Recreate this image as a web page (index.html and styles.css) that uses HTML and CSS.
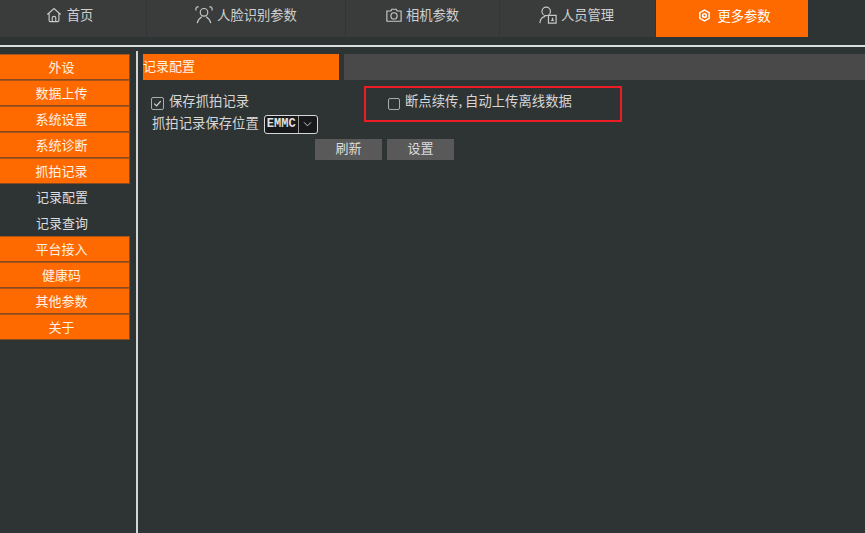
FILE: index.html
```html
<!DOCTYPE html>
<html lang="zh-CN">
<head>
<meta charset="utf-8">
<title>记录配置</title>
<link rel="stylesheet" href="styles.css">
</head>
<body>
<nav class="topnav">
  <a class="tab tab-home"><svg class="ico" viewBox="0 0 18 18"><path d="M1.500 8.500 9 1.800l7.500 6.700M3.500 7v8.200a1.300 1.300 0 0 0 1.300 1.300h8.400a1.300 1.300 0 0 0 1.300-1.300V7M7 16.500v-4a2 2 0 0 1 4 0v4"/></svg>首页</a>
  <a class="tab tab-face"><svg class="ico ico-lg" viewBox="0 0 20 20"><path d="M1 5V2.500L2.500 1H4M16 1h1.500L19 2.500V5"/><circle cx="10" cy="7" r="4.200"/><path d="M2.500 19c.8-4 3.500-6 5-7M17.500 19c-.8-4-3.500-6-5-7"/></svg>人脸识别参数</a>
  <a class="tab tab-cam"><svg class="ico" viewBox="0 0 18 18"><path d="M1 4.500h4.500l1-2h5l1 2H17v11.500H1z"/><circle cx="9" cy="10" r="3.500"/></svg>相机参数</a>
  <a class="tab tab-user"><svg class="ico ico-lg" viewBox="0 0 20 20"><circle cx="8" cy="6" r="4.700"/><path d="M1 19c.3-4 2.500-7 6-7.500"/><path d="M10.500 10.500h8.500v8.500h-8.500zM13.500 16h3M15 13v3"/></svg>人员管理</a>
  <a class="tab tab-more"><svg class="ico ico-more" viewBox="0 0 14 14"><path d="M7 1.200 12 4v6l-5 2.800L2 10V4z"/><circle cx="7" cy="7" r="2"/></svg>更多参数</a>
</nav>
<div class="rule"></div>
<div class="layout">
  <aside class="sidebar">
    <a class="side-item">外设</a>
    <a class="side-item">数据上传</a>
    <a class="side-item">系统设置</a>
    <a class="side-item">系统诊断</a>
    <a class="side-item">抓拍记录</a>
    <a class="side-sub">记录配置</a>
    <a class="side-sub">记录查询</a>
    <a class="side-item">平台接入</a>
    <a class="side-item">健康码</a>
    <a class="side-item">其他参数</a>
    <a class="side-item">关于</a>
  </aside>
  <main class="content">
    <header class="head">
      <div class="head-title">记录配置</div>
      <div class="head-rest"></div>
    </header>
    <section class="body">
      <div class="form">
        <label class="check-row"><span class="box box-on"><svg viewBox="0 0 12 12"><path d="M2.500 6.200 5 8.700l4.500-5.400"/></svg></span>保存抓拍记录</label>
        <div class="select-row">抓拍记录保存位置
          <span class="select"><span class="select-val">EMMC</span><span class="select-arrow"><svg viewBox="0 0 12 8"><path d="m2 1.500 4 4 4-4"/></svg></span></span>
        </div>
        <div class="actions">
          <button class="btn">刷新</button>
          <button class="btn">设置</button>
        </div>
      </div>
      <div class="highlight">
        <label class="check-row check-plain"><span class="box"></span>断点续传, 自动上传离线数据</label>
      </div>
    </section>
  </main>
</div>
</body>
</html>
```
FILE: styles.css
```css
* { box-sizing: border-box; }
html, body { height: 100%; }
body {
  margin: 0;
  overflow: hidden;
  background: #2e3334;
  color: #d6d6d6;
  font: 13px/17px "Noto Sans CJK SC", "Liberation Sans", sans-serif;
}
.topnav {
  display: flex;
  height: 37px;
  width: 808px;
  background: #3a3b3b;
}
.tab {
  display: flex;
  align-items: center;
  justify-content: center;
  gap: 4px;
  padding-bottom: 8px;
  font-size: 13.300px;
  color: #cfcfcf;
  border-right: 1px solid #323535;
}
.tab-home { width: 147px; padding-right: 7px; gap: 5px; }
.tab-face { width: 199px; }
.tab-cam { width: 154px; }
.tab-user { width: 156px; padding-right: 2px; }
.tab-more {
  width: 152px;
  background: #ff6a00;
  color: #fff;
  border-right: 0;
  padding-bottom: 6px;
  gap: 6px;
  padding-left: 5px;
}
.ico {
  width: 16px;
  height: 16px;
  fill: none;
  stroke: #c8c8c8;
  stroke-width: 1.300;
}
.ico-lg { width: 18px; height: 18px; }
.ico-more { width: 13px; height: 13px; stroke: #fff; stroke-width: 1.600; }
.rule {
  height: 2px;
  margin-top: 8px;
  background: #d9dedd;
}
.layout {
  display: flex;
  height: 487px;
}
.sidebar {
  display: flex;
  flex-direction: column;
  width: 138px;
  padding: 3px 6px 0 0;
  margin-top: 4px;
  border-right: 2px solid #d3d6d6;
}
.side-item, .side-sub {
  display: flex;
  align-items: center;
  justify-content: center;
  flex: none;
  height: 26px;
  padding: 0 6px 2px 0;
  color: #dedede;
}
.side-item {
  background: #ff6a00;
  color: #fff2e6;
  border: 1px solid #8a4a1e;
  border-left: 0;
  border-top-color: #a85518;
}
.content {
  flex: 1;
  min-width: 0;
  padding: 7px 0 0 5px;
}
.head {
  display: flex;
  gap: 5px;
  height: 26px;
}
.head-title {
  width: 196px;
  background: #ff6a00;
  color: #fff2e6;
  line-height: 23px;
}
.head-rest {
  flex: 1;
  background: #494949;
}
.body {
  display: flex;
  padding-top: 6px;
  font-size: 13.350px;
}
.form {
  width: 221px;
  padding: 4px 0 0 9px;
}
.check-row {
  display: flex;
  align-items: center;
  gap: 5px;
  height: 20px;
}
.box {
  width: 12px;
  height: 12px;
  flex: none;
  margin-top: 6px;
  border: 1px solid #a9acac;
  border-radius: 2px;
}
.box-on { width: 13px; height: 13px; margin-left: -1px; }
.box svg {
  display: block;
  width: 11px;
  height: 11px;
  fill: none;
  stroke: #d8d8d8;
  stroke-width: 1.300;
}
.select-row {
  display: flex;
  align-items: center;
  gap: 5px;
  height: 20px;
  margin-top: 2px;
  white-space: nowrap;
}
.select {
  display: flex;
  width: 54px;
  height: 19px;
  flex: none;
  margin-top: 5px;
  background: #17191a;
  border: 1px solid #d6d6d6;
  border-radius: 3px;
}
.select-val {
  width: 34px;
  border-right: 1px solid #9a9a9a;
  font: bold 12px/17px "Liberation Mono", monospace;
  text-align: center;
  color: #e0e0e0;
}
.select-arrow { flex: 1; display: flex; align-items: center; justify-content: center; }
.select-arrow svg {
  width: 11px;
  height: 7px;
  fill: none;
  stroke: #d0d0d0;
  stroke-width: 1.100;
}
.actions {
  display: flex;
  gap: 5px;
  margin: 7px -163px 0 163px;
  width: 139px;
}
.btn {
  width: 67px;
  height: 21px;
  padding: 0 0 5px;
  border: 0;
  background: #595959;
  color: #dcdcdc;
  font: inherit;
  font-size: 13px;
}
.highlight {
  width: 258px;
  height: 36px;
  border: 2px solid #ed1c24;
  display: flex;
  align-items: center;
  padding: 0 0 8px 22px;
}
.highlight .box { margin-top: 7px; }
```
